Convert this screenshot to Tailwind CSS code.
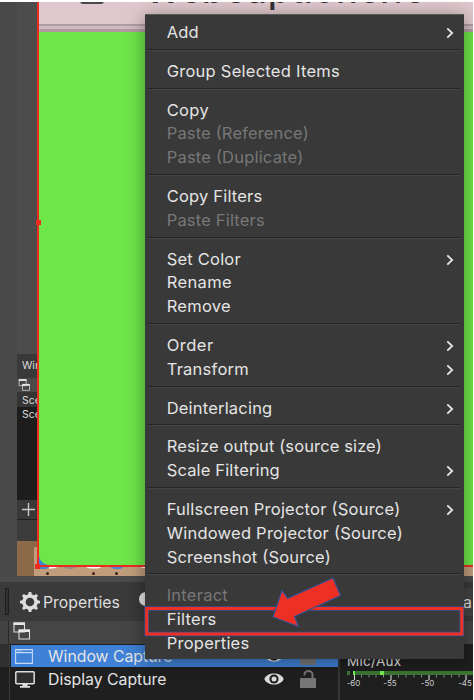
<!DOCTYPE html>
<html lang="en">
<head>
<meta charset="utf-8">
<title>Source menu</title>
<script src="https://cdn.jsdelivr.net/npm/@tailwindcss/browser@4"></script>
</head>
<body class="w-[474px] h-[700px] overflow-hidden bg-white font-['Inter','Liberation_Sans',sans-serif]">
<svg class="hidden">
  <symbol id="chev" viewBox="0 0 8 12"><path d="M1.3 1.300 6.200 6 1.300 10.700" fill="none" stroke="#e6e6e6" stroke-width="1.800"/></symbol>
  <symbol id="wins" viewBox="0 0 18 18"><path d="M1 1h10.500v9H1zM6 8h10.500v9H6z" fill="#454545" stroke="#dedede" stroke-width="1.100"/><path d="M.5.500h11.500v2.500H.5zM5.500 7.500H17V10H5.500z" fill="#e6e6e6"/></symbol>
  <symbol id="eye" viewBox="0 0 20 12"><path d="M.3 6C3-1.300 17-1.300 19.700 6 17 13.300 3 13.300.3 6Z" fill="#dedede"/><circle cx="10" cy="6" r="4.600" fill="#1f1f1f"/><circle cx="10" cy="6" r="2.500" fill="#dedede"/></symbol>
  <symbol id="lock" viewBox="0 0 16 18"><path d="M4.500 5.500V4.500a4 3.500 0 0 1 8 0V9" fill="none" stroke="#777" stroke-width="2"/><rect x="0" y="8" width="16" height="10" rx=".8" fill="#777"/></symbol>
</svg>
<div class="relative w-[473px] h-[700px] pt-[2px] flex flex-col overflow-hidden">
  <!-- preview canvas -->
  <div class="h-[574px] shrink-0 flex bg-[#4b4b4b]">
    <div class="w-[17px] bg-[#494949]"></div>
    <div class="w-[20px] flex flex-col text-[10.500px] text-[#dcdcdc] overflow-hidden whitespace-nowrap">
      <div class="h-[352px] bg-[#4c4c4c]"></div>
      <div class="h-[24px] bg-[#393939] pl-[5px] leading-[24px]">Win</div>
      <div class="h-[14px] bg-[#4a4a4a] pl-[1px] pt-px"><svg class="w-[13px] h-[12px]"><use href="#wins"/></svg></div>
      <div class="h-[15px] bg-[#343434] pl-[5px] leading-[17px]">Sce</div>
      <div class="h-[93px] bg-[#1d1d1d] pl-[5px] leading-[15px]">Sce</div>
      <div class="h-[20px] bg-[#393939] border-b border-[#202020] flex items-center justify-center"><svg class="w-[13px] h-[13px] ml-[2px]" viewBox="0 0 13 13"><path d="M6.500 0v13M0 6.500h13" stroke="#ccc" stroke-width="1.300"/></svg></div>
      <div class="h-[21px] bg-[#3b3b3b] rounded-bl-[3px]"></div>
      <div class="h-[35px] bg-[#8c6948] flex justify-end items-end"><div class="w-[3px] h-[29px] bg-[#c19d7c] rounded-tl-[2px]"></div></div>
    </div>
    <div class="relative flex-1 border-l-2 border-[#ed2c20] flex flex-col h-[565px]">
      <div class="h-[22px] bg-[#dfc8cd] overflow-hidden relative">
        <div class="absolute left-[41px] -top-[2px] w-[24px] h-[4px] rounded-b-[3px] bg-[#4b494e]"></div>
        <div class="absolute left-[106px] -top-[30px] text-[36px] leading-[36px] font-medium text-[#343238] whitespace-nowrap tracking-[0.700px]">Webcaptioner.c</div>
      </div>
      <div class="h-[2px] bg-[#af9da2]"></div><div class="h-[3px] bg-[#d0bbc0]"></div><div class="h-[3px] bg-[#b39aa2]"></div>
      <div class="flex-1 bg-[#3d83dc] border-b-2 border-[#ed2c20]"><div class="h-[533px] bg-[#6ee649] rounded-bl-[10px]"></div></div>
      <div class="absolute -left-[3px] top-[218px] w-[5px] h-[5px] bg-[#ed2c20]"></div>
      <div class="absolute -left-[2px] top-[565px] w-[437px] h-[9px] bg-[#c19d7c]">
        <svg class="w-full h-full" viewBox="0 0 437 9"><path d="M2 0h10q-1 2-5 2H2zM74 0h12q-1 2-6 2t-6-2" fill="#4a83c9"/><path d="M12 0h8q-1 1.500-8 1.500zM49 0h15q-1 1.500-7 1.500T49 0M104 0h6v1h-5z" fill="#fff"/><path d="M27 0h12q-2 2-6 2t-6-2" fill="#938b8a"/><g fill="#402314"><circle cx="10.500" cy="6.500" r="1.500"/><circle cx="56.500" cy="6.500" r="1.500"/><circle cx="79.500" cy="6.500" r="1.500"/></g></svg>
      </div>
      <div class="absolute -left-[4px] top-[562px] w-[5px] h-[5px] bg-[#ed2c20]"></div>
    </div>
  </div>
  <div class="h-[6px] shrink-0 bg-[#4b4b4b]"></div>
  <!-- source toolbar -->
  <div class="h-[39px] shrink-0 bg-[#3a3a3a] flex items-center text-[15.800px] text-[#dedede]">
    <div class="w-[4px] h-[27px] ml-[5px] border border-[#1d1d1d] bg-[#303030]"></div>
    <svg class="w-[20px] h-[20px] ml-[11px]" viewBox="-10 -10 20 20"><g fill="#dedede"><g id="teeth"><path d="M-2-6.500-1.300-10h2.600L2-6.500v13L1.300 10h-2.600L-2 6.500z"/></g><use href="#teeth" transform="rotate(45)"/><use href="#teeth" transform="rotate(90)"/><use href="#teeth" transform="rotate(135)"/><circle r="7.800"/></g><circle r="4.300" fill="#3a3a3a"/></svg>
    <span class="ml-[3px] w-[78px] whitespace-nowrap pt-[2px]">Properties</span>
    <div class="w-[14px] h-[14px] rounded-full bg-[#e6e6e6] ml-[18px] -mt-[6px]"></div>
    <div class="flex-1"></div>
    <div class="w-[10px] h-[28px] bg-[#444] leading-[29px]">a</div>
  </div>
  <div class="h-[23px] shrink-0 bg-[#454545] flex">
    <div class="w-[9px] bg-[#424242] border-r border-[#292929]"></div>
    <svg class="w-[18px] h-[18px] ml-[4px] mt-[1px]"><use href="#wins"/></svg>
  </div>
  <!-- source list and mixer -->
  <div class="flex-1 bg-[#1f1f1f] flex text-[15.800px] text-[#e4e4e4]">
    <div class="w-[10px] border-r border-[#3a3a3a]"><div class="h-[23px] bg-[#303030]"></div></div>
    <div class="w-[330px] pt-px pl-px border-r-2 border-[#363636]">
      <div class="h-[22px] bg-[#3f81d6] flex items-center relative">
        <svg class="ml-[4px] w-[18px] h-[15px]" viewBox="0 0 18 15"><path d="M.6.600h16.800v13.800H.6zM.6 3.600h16.800" fill="none" stroke="#c6d9f1" stroke-width="1.100"/><path d="M2.500 2h5" stroke="#dce8f7" stroke-dasharray="1.200 1"/></svg>
        <span class="ml-[15px] pt-[2px] whitespace-nowrap w-[130px]">Window Capture</span>
        <svg class="absolute left-[253px] top-[5px] w-[20px] h-[12px]"><use href="#eye"/></svg>
        <svg class="absolute left-[289px] top-[2px] w-[16px] h-[18px]"><use href="#lock"/></svg>
      </div>
      <div class="h-[24px] flex items-center relative">
        <svg class="ml-[4px] w-[20px] h-[17px]" viewBox="0 0 20 17"><rect x=".8" y=".8" width="18.400" height="12" rx="1" fill="#303030" stroke="#dedede" stroke-width="1.500"/><path d="M7.500 13h5v2H15v1.800H5V15h2.500z" fill="#dedede"/></svg>
        <span class="ml-[13px] pt-[2px] whitespace-nowrap w-[130px]">Display Capture</span>
        <svg class="absolute left-[253px] top-[6px] w-[20px] h-[12px]"><use href="#eye"/></svg>
        <svg class="absolute left-[289px] top-[3px] w-[16px] h-[18px]"><use href="#lock"/></svg>
      </div>
    </div>
    <div class="flex-1 pl-[7px] pt-[8px] overflow-hidden">
      <div class="text-[13.500px] leading-[18px] h-[19px] tracking-[0.300px]">Mic/Aux</div>
      <svg class="w-[126px] h-[20px]" viewBox="0 0 126 20"><path d="M0 0h3v4H0zM8 0h118v4H8z" fill="#3c7832"/><path d="M6 0h2v4H6zM33 0h4v4h-4z" fill="#76f052"/><path d="M7.500 4v5M44 4v5M82 4v5M119 4v5" stroke="#ddd" stroke-width="1.100"/><path d="M14.500 4v2.500M22 4v2.500M29 4v2.500M36.500 4v2.500M51.500 4v2.500M59 4v2.500M67 4v2.500M74.500 4v2.500M89.500 4v2.500M97 4v2.500M104.500 4v2.500M112 4v2.500" stroke="#888"/><g font-family="Inter,sans-serif" font-size="8" fill="#ccc" text-anchor="middle"><text x="6.500" y="14.500">-60</text><text x="43" y="14.500">-55</text><text x="80.500" y="14.500">-50</text><text x="118" y="14.500">-45</text></g></svg>
    </div>
  </div>
  <!-- context menu -->
  <div id="menu" class="absolute left-[145px] top-[14px] w-[319px] h-[645px] pt-[5.100px] bg-[#393939] border-t border-[#5a5a5a] text-[16.500px] text-[#e4e4e4] shadow-[0_3px_18px_rgba(0,0,0,0.4)]"></div>
  <svg class="absolute left-0 top-0 w-[474px] h-[700px]" viewBox="0 0 474 700"><path d="M146.700 608.500H461.800V634H146.700Z" fill="none" stroke="#345295" stroke-width="4.600"/><path d="M146.700 608.500H461.800V634H146.700Z" fill="none" stroke="#ee3024" stroke-width="3"/><path d="M273 617 282 590.500 287.500 598.500 333 578 340.500 595.500 294.500 616.500 298.500 626.500Z" fill="#ee3024" stroke="#345295" stroke-width="1.200"/></svg>
</div>
<template id="row"><div class="h-[23.800px] pl-[22px] pr-[10px] flex items-center justify-between whitespace-nowrap"><svg class="w-[250px] h-[23.800px] overflow-visible"><text x="-0.300" y="17.700" fill="currentColor"></text></svg><svg class="chev w-[8px] h-[12px] mt-[2px]"><use href="#chev"/></svg></div></template>
<template id="sep"><div class="h-[15px] pt-[5px] pl-[2px] pr-[4px]"><div class="h-[2px] bg-[#252525] border-b border-[#444]"></div></div></template>
<script>
// label, width of the label in px, submenu, disabled
const items = [["Add",31,1],0,["Group Selected Items",172],0,["Copy",41],["Paste (Reference)",141,0,1],["Paste (Duplicate)",135.5,0,1],0,["Copy Filters",94.5],["Paste Filters",97,0,1],0,["Set Color",73,1],["Rename",64],["Remove",63],0,["Order",45.5,1],["Transform",81,1],0,["Deinterlacing",104.500,1],0,["Resize output (source size)",214],["Scale Filtering",112,1],0,["Fullscreen Projector (Source)",232.500,1],["Windowed Projector (Source)",235],["Screenshot (Source)",163],0,["Interact",60,0,1],["Filters",48.500],["Properties",81.500]];
const menu = document.getElementById("menu");
for (const it of items) {
  const node = document.getElementById(it ? "row" : "sep").content.firstElementChild.cloneNode(true);
  menu.append(node);
  if (!it) continue;
  const label = node.querySelector("text");
  label.textContent = it[0];
  label.setAttribute("textLength", it[1] + 1);
  if (!it[2]) node.querySelector(".chev").remove();
  if (it[3]) label.setAttribute("fill", "#777");
}
</script>
</body>
</html>
